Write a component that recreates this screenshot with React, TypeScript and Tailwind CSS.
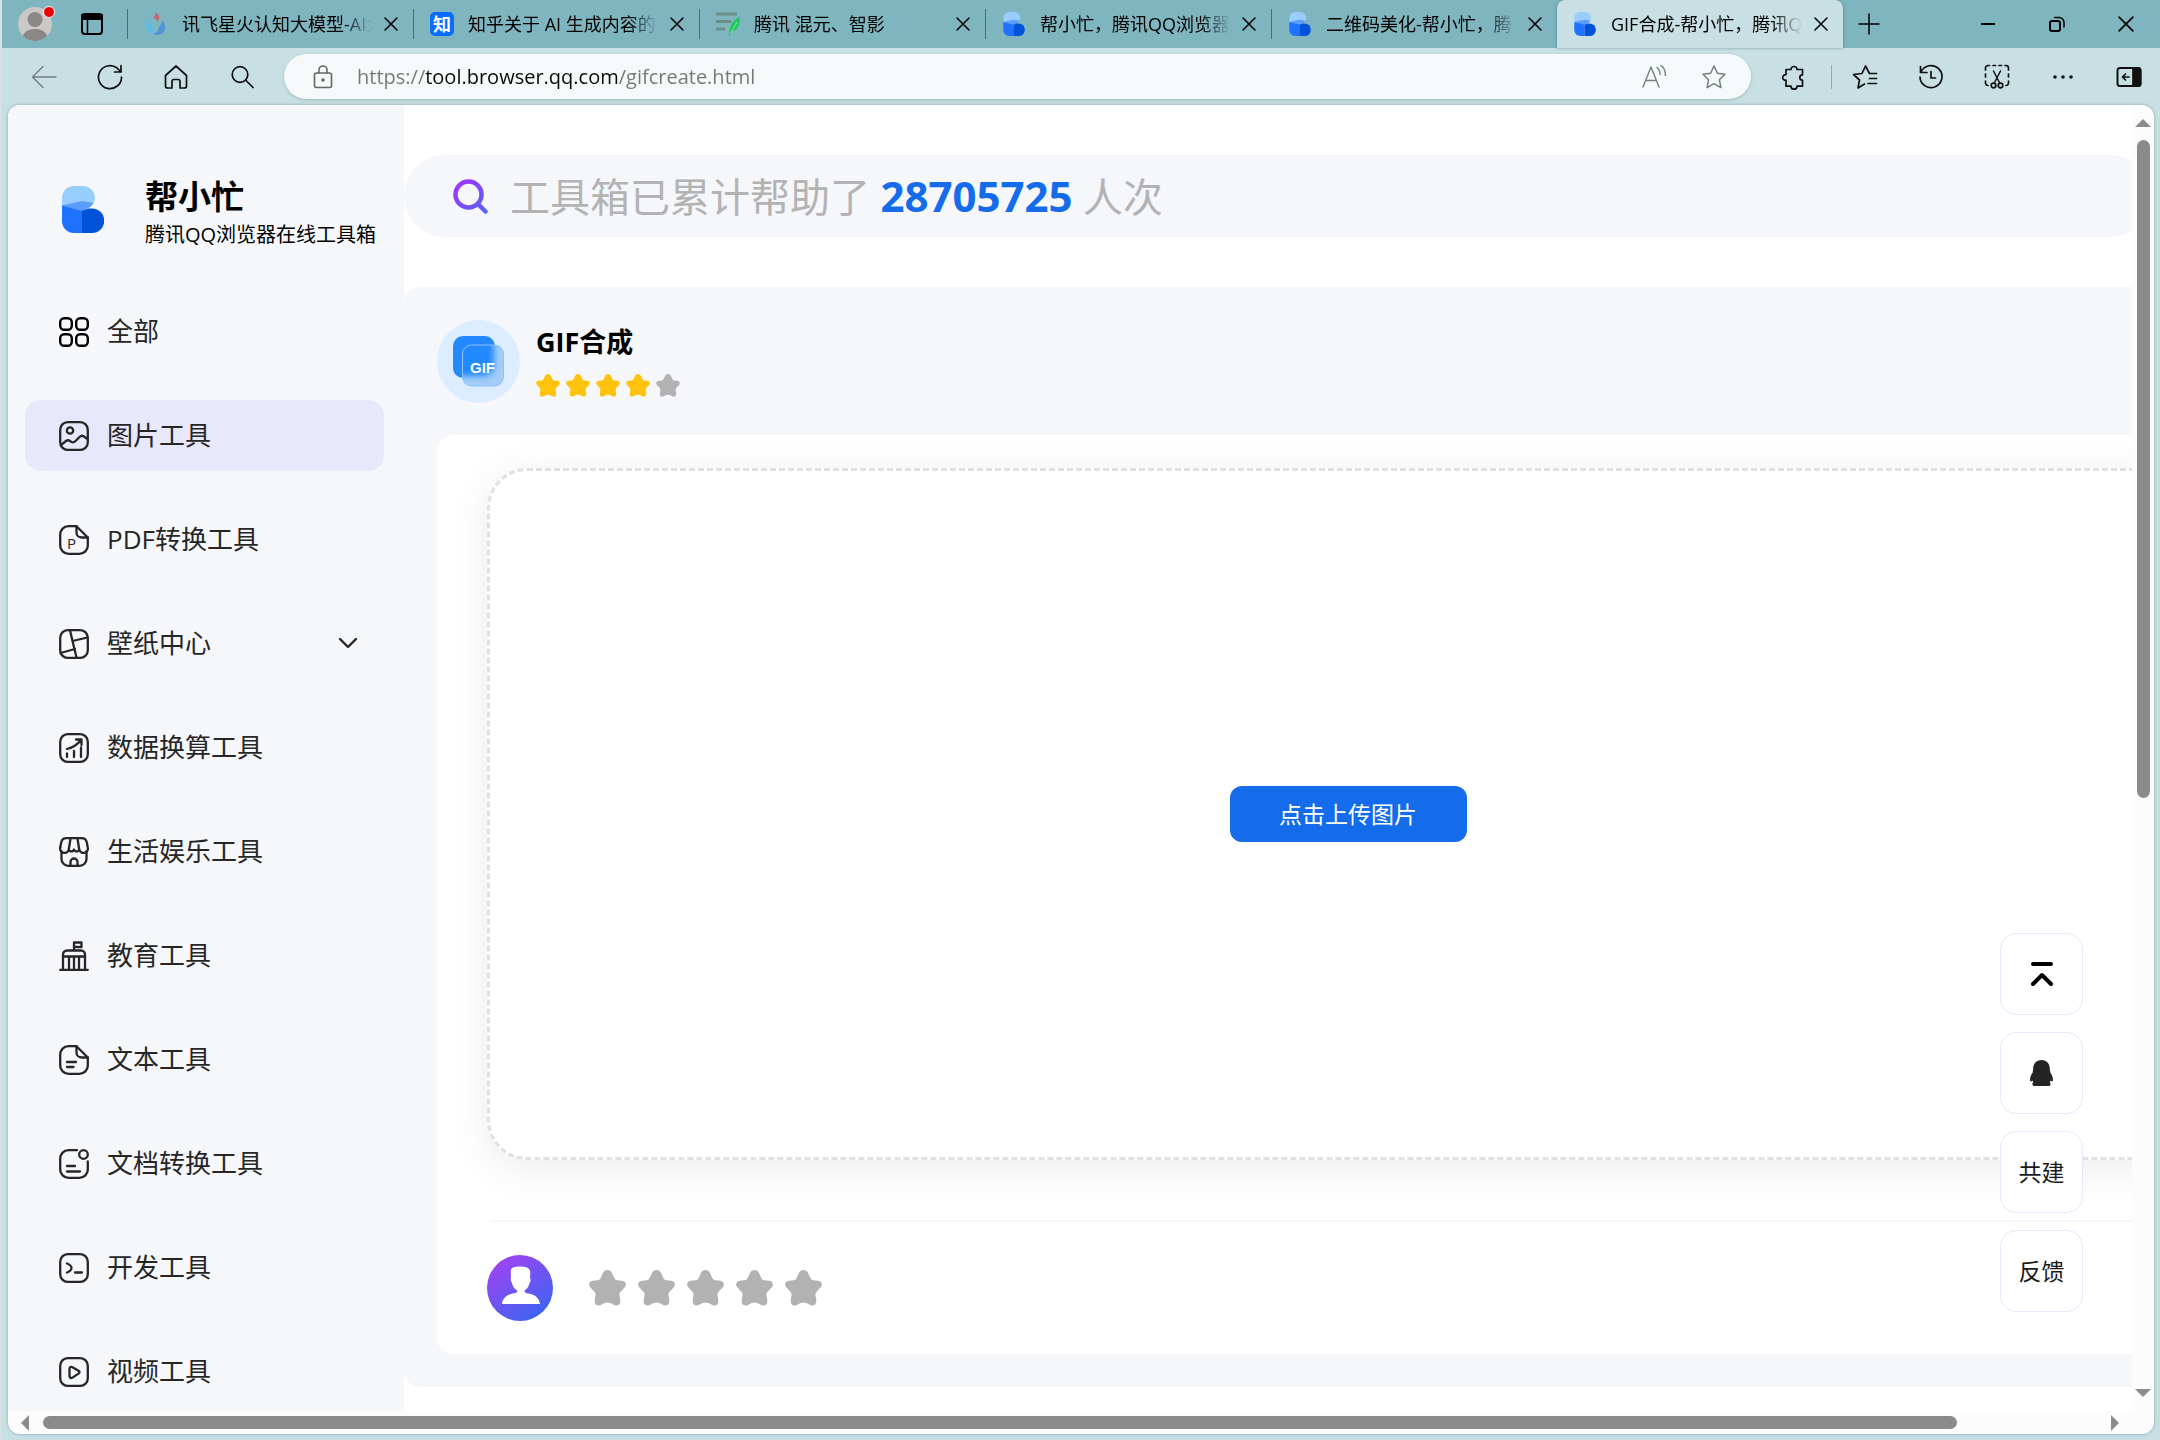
import type { ReactNode } from "react";

const RULE = { fill: "none", stroke: "currentColor", strokeLinecap: "round", strokeLinejoin: "round" } as const;

function Logo({ className }: { className: string }) {
  return (
    <svg viewBox="0 0 42 47" className={className} aria-hidden="true">
      <path fill="#97cdff" d="M0 20V12A12 12 0 0 1 12 0h9a12 12 0 0 1 12 12c0 2-.5 4-2 5.500L20 22z" />
      <path fill="#5a9dff" d="M0 19.500 20 15l11.500 2c-1.500 3-3.500 4.500-6.500 5.500L20 26z" />
      <path fill="#1f72ff" d="M0 19.500 20 25v22h-8A12 12 0 0 1 0 35z" />
      <path fill="#0052d9" d="m20 25 6-2.500h4a12.200 12.200 0 0 1 0 24.500H20z" />
    </svg>
  );
}

function Star({ className }: { className: string }) {
  return (
    <svg viewBox="0 0 37 36" className={className} fill="currentColor" aria-hidden="true">
      <path d="M18.500 0c2.500 0 4 1.500 5 4l1.800 4c.6 1.300 1.500 2 3 2.200l5 .5c3.700.5 4.700 4.300 2.300 6.800l-4 4.200c-1 1-1.300 2.200-1.100 3.500l.8 5c.6 4-2.600 6.400-6 4.800l-4-2c-1.800-.8-3.800-.8-5.600 0l-4 2c-3.400 1.600-6.600-.8-6-4.800l.8-5c.2-1.300-.1-2.500-1.100-3.500l-4-4.200c-2.400-2.500-1.400-6.300 2.300-6.800l5-.5c1.500-.2 2.400-.9 3-2.200l1.800-4c1-2.500 2.500-4 5-4z" />
    </svg>
  );
}

function Glyph({ children, width = 2.3 }: { children: ReactNode; width?: number }) {
  return (
    <svg viewBox="0 0 30 30" className="size-[30px] shrink-0" {...RULE} strokeWidth={width} aria-hidden="true">
      {children}
    </svg>
  );
}

const frame = <rect x="1.200" y="1.200" width="27.600" height="27.600" rx="7.500" />;
const sheet = (
  <>
    <path d="M17.500 1.200H9.500A8.300 8.300 0 0 0 1.200 9.500v11A8.300 8.300 0 0 0 9.500 28.800h11a8.300 8.300 0 0 0 8.300-8.300V12.500z" />
    <path d="M17.500 1.200v6.300a5 5 0 0 0 5 5h6.300" />
  </>
);

const menu: { label: string; icon: ReactNode; active?: boolean; expandable?: boolean }[] = [
  {
    label: "全部",
    icon: (
      <Glyph width={2.4}>
        <g stroke="#000">
          <rect x="1.200" y="1.200" width="11.600" height="11.600" rx="4" />
          <rect x="17.200" y="1.200" width="11.600" height="11.600" rx="4" />
          <rect x="1.200" y="17.200" width="11.600" height="11.600" rx="4" />
          <rect x="17.200" y="17.200" width="11.600" height="11.600" rx="4" />
        </g>
      </Glyph>
    ),
  },
  {
    label: "图片工具",
    active: true,
    icon: (
      <Glyph>
        {frame}
        <circle cx="11" cy="9.500" r="3.200" />
        <path d="m2 24 5-4q2-1.500 4 0l1.500 1q2 1 4-1l4-4q2-2 4-.8L28.500 18" />
      </Glyph>
    ),
  },
  {
    label: "PDF转换工具",
    icon: (
      <Glyph>
        {sheet}
        <text x="8" y="24" fontSize="15" fill="currentColor" stroke="none">P</text>
      </Glyph>
    ),
  },
  {
    label: "壁纸中心",
    expandable: true,
    icon: (
      <Glyph>
        {frame}
        <path d="M11 1.500 17.500 28.500M13.500 12 28.500 8.500M1.500 24 16 20" />
      </Glyph>
    ),
  },
  {
    label: "数据换算工具",
    icon: (
      <Glyph>
        {frame}
        <path d="M8 16q8.500-2 14-9M17 6.500h5.500V12M8 20.500V24M15 18v6M22 14.500V24" />
      </Glyph>
    ),
  },
  {
    label: "生活娱乐工具",
    icon: (
      <Glyph>
        <path d="M2.500 14.500V22a6.800 6.800 0 0 0 6.800 6.800h11.400a6.800 6.800 0 0 0 6.800-6.800v-7.500" />
        <path d="M1.200 10.500 2.200 5.500Q3 1.200 7.500 1.200h15q4.500 0 5.300 4.300l1 5a4.400 4.400 0 0 1-8.600 2" />
        <path d="M1.200 10.500a4.400 4.400 0 0 0 8.600 2L11.500 1.500M18.500 1.500l1.700 11M9.800 12.500a2.700 2.700 0 0 0 5.200 0a2.700 2.700 0 0 0 5.200 0M11.500 28.500V25a3.500 3.500 0 0 1 7 0v3.500" />
      </Glyph>
    ),
  },
  {
    label: "教育工具",
    icon: (
      <Glyph>
        <path d="M1.200 28.800h27.600M4 28.800V13.500a4 4 0 0 1 4-4h14a4 4 0 0 1 4 4v15.300M4 15.500h22M10 15.500v13M15 15.500v13M20 15.500v13M15 9.500V1.500h7.500V6H15" />
      </Glyph>
    ),
  },
  {
    label: "文本工具",
    icon: (
      <Glyph>
        {sheet}
        <path d="M8 17h9M8 22h6.500" />
      </Glyph>
    ),
  },
  {
    label: "文档转换工具",
    icon: (
      <Glyph>
        <path d="M18 1.200H9.500A8.300 8.300 0 0 0 1.200 9.500v11A8.300 8.300 0 0 0 9.500 28.800h11a8.300 8.300 0 0 0 8.300-8.300V12.500" />
        <circle cx="24.500" cy="5.500" r="4.300" />
        <path d="M8 17h8M8 22.500h13" />
      </Glyph>
    ),
  },
  {
    label: "开发工具",
    icon: (
      <Glyph>
        {frame}
        <path d="M8 10.500c2.500 1 4.500 3 4.500 4.500s-2 3.500-4.500 4.500M16 19.500h7" />
      </Glyph>
    ),
  },
  {
    label: "视频工具",
    icon: (
      <Glyph>
        {frame}
        <path d="M10.500 12v7c0 2 1.500 2.500 3 1.600l6-4q2-1.400 0-2.800l-6-3.500c-1.500-1-3-.3-3 1.700z" />
      </Glyph>
    ),
  },
];

const logoIcon = <Logo className="h-6 w-6" />;

const tabs: { title: string; icon: ReactNode; active?: boolean }[] = [
  {
    title: "讯飞星火认知大模型-AI大",
    icon: (
      <svg viewBox="0 0 24 24" className="size-6" aria-hidden="true">
        <path d="M11 0c6 4 5 7 2 10 0-3-2-4-4-4 2-2 2.500-4 2-6z" fill="#c4686f" />
        <path d="M6 5c1 4-1 6 2 9 2 2 3 4 1 8C4 21 2 18 2 14c0-4 2-6 4-9z" fill="#5fbbe0" />
        <path d="M18 8c4 5 4 9 1 12.500-3 3-7 3-10 1.500 4-1 5-3 6-6 1-3 3-4 3-8z" fill="#4f93d8" />
      </svg>
    ),
  },
  {
    title: "知乎关于 AI 生成内容的",
    icon: (
      <span className="flex size-6 items-center justify-center rounded-[5px] bg-[#0a6cff] text-[18px] leading-6 font-bold text-white">知</span>
    ),
  },
  {
    title: "腾讯 混元、智影",
    icon: (
      <svg viewBox="0 0 24 24" className="size-6" aria-hidden="true">
        <path d="M0 2h21M0 9.500h15M0 17h9" stroke="#6c8d84" strokeWidth="3" />
        <path d="M24 5c0 8-2 13-8 14l-2 5h-1c0-9 3-16 11-19z" fill="#1fc95a" />
        <path d="m14 22 7-12" stroke="#7fe59c" strokeWidth="1" />
      </svg>
    ),
  },
  { title: "帮小忙，腾讯QQ浏览器", icon: logoIcon },
  { title: "二维码美化-帮小忙，腾", icon: logoIcon },
  { title: "GIF合成-帮小忙，腾讯Q", icon: logoIcon, active: true },
];

function Cross({ className }: { className: string }) {
  return (
    <svg viewBox="0 0 14 14" className={className} {...RULE} strokeWidth="1.500" aria-hidden="true">
      <path d="m1 1 12 12M13 1 1 13" />
    </svg>
  );
}

function TabStrip() {
  return (
    <header className="flex h-12 items-stretch bg-[#7fb5bf] text-black">
      <div className="flex flex-1 items-stretch pl-4">
        <button type="button" aria-label="个人资料" className="relative mr-[29px] size-[34px] self-center">
          <svg viewBox="0 0 34 34" className="size-[34px] rounded-full" aria-hidden="true">
            <rect width="34" height="34" fill="#cbc9c6" />
            <circle cx="17" cy="12.500" r="7.500" fill="#8a8886" />
            <path d="M4 34c0-8 5-12 13-12s13 4 13 12z" fill="#8a8886" />
          </svg>
          <span className="absolute -top-px -right-[3px] size-3 rounded-full border border-white bg-[#e80000]" />
        </button>
        <button type="button" aria-label="标签页操作" className="mr-6 self-center">
          <svg viewBox="0 0 22 22" className="size-[22px]" {...RULE} strokeWidth="2" aria-hidden="true">
            <rect x="1" y="1" width="20" height="20" rx="3" />
            <path d="M1 2h20v4H1z" fill="currentColor" />
            <path d="M6.500 6v15" strokeWidth="1.500" />
          </svg>
        </button>
        {tabs.map((tab, i) => (
          <div
            key={tab.title}
            className={
              tab.active
                ? "flex max-w-[286px] min-w-0 flex-1 items-center rounded-t-lg bg-[#c8dfe3] pl-4 shadow-[0_0_3px_rgba(0,60,70,0.45)]"
                : "flex max-w-[286px] min-w-0 flex-1 items-center"
            }
          >
            {!tab.active && <span className="mr-4 h-[30px] w-px shrink-0 bg-[#4b6e75]" />}
            {tab.icon}
            <button
              type="button"
              aria-current={tab.active ? "page" : undefined}
              className="ml-[14px] min-w-0 flex-1 overflow-hidden text-left text-[18px] leading-7 whitespace-nowrap [mask-image:linear-gradient(to_right,#000_calc(100%-30px),transparent)]"
            >
              {tab.title}
            </button>
            <button type="button" aria-label={`关闭标签页 ${i + 1}`} className="mr-[15px] ml-3 shrink-0">
              <Cross className="size-[14px]" />
            </button>
          </div>
        ))}
        <button type="button" aria-label="新建标签页" className="ml-[15px] self-center">
          <svg viewBox="0 0 22 22" className="size-[22px]" {...RULE} strokeWidth="1.500" aria-hidden="true">
            <path d="M11 1v20M1 11h20" />
          </svg>
        </button>
      </div>
      <div className="flex items-center gap-[53px] pr-[26px]">
        <button type="button" aria-label="最小化">
          <svg viewBox="0 0 16 16" className="size-4" {...RULE} strokeWidth="2" aria-hidden="true">
            <path d="M1 8h14" strokeLinecap="butt" />
          </svg>
        </button>
        <button type="button" aria-label="还原">
          <svg viewBox="0 0 16 16" className="size-4" {...RULE} strokeWidth="2" aria-hidden="true">
            <rect x="1" y="5" width="10" height="10" rx="2" />
            <path d="M5.500 1.500H10a5 5 0 0 1 5 5V11" strokeWidth="1.500" />
          </svg>
        </button>
        <button type="button" aria-label="关闭">
          <Cross className="size-4" />
        </button>
      </div>
    </header>
  );
}

function Tool({ label, children, muted = false }: { label: string; children: ReactNode; muted?: boolean }) {
  return (
    <button type="button" aria-label={label} className={muted ? "text-[#747f82]" : "text-[#111]"}>
      <svg viewBox="0 0 26 26" className="size-[26px]" {...RULE} strokeWidth="1.700" aria-hidden="true">
        {children}
      </svg>
    </button>
  );
}

function Toolbar() {
  return (
    <div className="flex items-center gap-10 pt-1.5 pr-[18px] pb-1.5 pl-[29px]">
      <Tool label="后退" muted>
        <path d="M25 13H2M12 2.500 1.500 13 12 23.500" strokeWidth="1.400" />
      </Tool>
      <Tool label="刷新">
        <path d="M24.500 13A11.500 11.500 0 1 1 20 4l4 4M24 1.500V8h-6.500" />
      </Tool>
      <Tool label="主页">
        <path d="M2.500 11.500 13 2l10.500 9.500V22a2 2 0 0 1-2 2H17v-6.500a2 2 0 0 0-2-2h-4a2 2 0 0 0-2 2V24H4.500a2 2 0 0 1-2-2z" />
      </Tool>
      <Tool label="搜索">
        <circle cx="11" cy="10.500" r="7.800" />
        <path d="m17 16.500 7 7" />
      </Tool>
      <form className="-ml-[11px] flex h-[45px] min-w-0 flex-1 items-center rounded-full bg-[#f5f9fa] pr-6 pl-[26px] shadow-[0_1px_3px_rgba(80,120,130,0.35)]">
        <svg viewBox="0 0 26 26" className="size-[26px] shrink-0 text-[#666]" {...RULE} strokeWidth="1.600" aria-hidden="true">
          <rect x="4.500" y="9" width="17" height="14.500" rx="2" />
          <path d="M9 9V6a4 4 0 0 1 8 0v3" />
          <circle cx="13" cy="16" r="1" fill="currentColor" />
        </svg>
        <input
          type="text"
          aria-label="地址栏"
          defaultValue="https://tool.browser.qq.com/gifcreate.html"
          className="ml-[21px] h-[45px] min-w-0 flex-1 bg-[linear-gradient(to_right,#767676_68px,#0a0a0a_68px,#0a0a0a_261px,#767676_261px)] bg-clip-text text-[20px] text-transparent outline-none"
        />
        <div className="flex items-center gap-[34px]">
          <Tool label="朗读此页" muted>
            <path d="m2 23 8-20 8 20M5 16.500h10M16 3.500c2 1.500 3 4 3 7M20 1.500c3 2 4.500 5 4.500 10" strokeWidth="1.400" />
          </Tool>
          <Tool label="收藏此页" muted>
            <path d="m13 2 3.400 7.200 7.600 1-5.600 5.500 1.500 7.900-6.900-3.900-6.900 3.900 1.500-7.900L2 10.200l7.600-1z" strokeWidth="1.500" />
          </Tool>
        </div>
      </form>
      <div className="-ml-2.5 flex items-center gap-6">
        <Tool label="扩展">
          <path d="M5 5.500h5a3 3 0 1 1 6 0h5.500v5.300a2.700 2.700 0 1 0 0 5.400v6H16a3 3 0 0 1-6 0H5v-6a2.800 2.800 0 1 1 0-5.500z" />
        </Tool>
        <span className="h-6 w-px bg-[#94a9ad]" />
      </div>
      <div className="-ml-5 flex items-center gap-10">
        <Tool label="收藏夹">
          <path d="M24.500 9.500h-7L13.500 2 10 9.500l-8.500 1 6 5.500-1.500 8 6.500-4M17.500 14.500h7M16 19.500h8.500" />
        </Tool>
        <Tool label="历史记录">
          <path d="M3 8a11 11 0 1 1-1 5M2.500 2.500V8.500H9M13 7.500v6.500h4.500" />
        </Tool>
        <Tool label="网页捕获">
          <path d="M1.500 6V4a2.500 2.500 0 0 1 2.500-2.500h1.500M9 1.500h2.500M15 1.500h2.500M21 1.500h1a2.500 2.500 0 0 1 2.500 2.500v2M24.500 10v3M24.500 17v2a2.500 2.500 0 0 1-2.500 2.500M1.500 10v3M1.500 17v2a2.500 2.500 0 0 0 2.500 2.500" />
          <path d="m9.500 7 6.200 12M16.500 7l-6.200 12" strokeWidth="1.500" />
          <circle cx="9.500" cy="21.500" r="2.300" />
          <circle cx="16.500" cy="21.500" r="2.300" />
        </Tool>
        <Tool label="更多">
          <g fill="currentColor" stroke="none">
            <circle cx="5" cy="13" r="1.800" />
            <circle cx="13" cy="13" r="1.800" />
            <circle cx="21" cy="13" r="1.800" />
          </g>
        </Tool>
        <Tool label="侧边栏">
          <rect x="1.500" y="4" width="23" height="18" rx="2.500" strokeWidth="2" />
          <path d="M17 4h5.500a2 2 0 0 1 2 2v14a2 2 0 0 1-2 2H17z" fill="currentColor" />
          <path d="M13 13H6.500M9.500 10l-3 3 3 3" />
        </Tool>
      </div>
    </div>
  );
}

function Sidebar() {
  return (
    <aside className="w-[396px] shrink-0 bg-[#f5f7fb]">
      <div className="flex pt-[69px] pl-[54px]">
        <Logo className="mt-3 h-[47px] w-[42px]" />
        <div className="ml-[41px] text-black">
          <h1 className="text-[33px] leading-[46px] font-bold">帮小忙</h1>
          <p className="text-[20px] leading-[30px] whitespace-nowrap">腾讯QQ浏览器在线工具箱</p>
        </div>
      </div>
      <nav className="mt-[46px] flex flex-col gap-[33px] pr-5 pl-[17px]">
        {menu.map((item) => (
          <a
            key={item.label}
            href="#"
            className={
              item.active
                ? "flex h-[71px] items-center rounded-2xl bg-[#e8e8fc] px-[34px] text-[26px] text-[#262626]"
                : "flex h-[71px] items-center rounded-2xl px-[34px] text-[26px] text-[#262626]"
            }
          >
            {item.icon}
            <span className="ml-[18px] flex-1">{item.label}</span>
            {item.expandable && (
              <svg viewBox="0 0 20 20" className="-mr-2 size-5" {...RULE} strokeWidth="2.400" aria-hidden="true">
                <path d="m2 5 8 8 8-8" />
              </svg>
            )}
          </a>
        ))}
      </nav>
    </aside>
  );
}

function GifBadge() {
  return (
    <svg viewBox="0 0 83 83" className="size-[83px]" aria-hidden="true">
      <defs>
        <clipPath id="pane">
          <rect x="25.500" y="25" width="41" height="41" rx="9" />
        </clipPath>
        <filter id="frost" x="-50%" y="-50%" width="200%" height="200%">
          <feGaussianBlur stdDeviation="3" />
        </filter>
      </defs>
      <circle cx="41.500" cy="41.500" r="41.500" fill="#dcedff" />
      <rect x="16" y="16" width="42" height="42" rx="10" fill="#2489ff" />
      <g clipPath="url(#pane)">
        <rect x="25" y="24" width="43" height="43" fill="#a3cdf7" />
        <rect x="12" y="12" width="45" height="44" rx="10" fill="#2489ff" filter="url(#frost)" />
      </g>
      <rect x="25.500" y="25" width="41" height="41" rx="9" fill="none" stroke="#8cc3ff" />
      <text x="33" y="53" fontSize="15" fontWeight="700" fill="#fff" fontFamily="Liberation Sans, sans-serif">GIF</text>
    </svg>
  );
}

function SearchBar() {
  return (
    <label className="relative mr-[139px] flex h-[82px] items-center rounded-full bg-[#f5f7fb] pl-[49px]">
      <svg viewBox="0 0 35 35" className="size-[35px]" aria-hidden="true">
        <defs>
          <linearGradient id="lens" x1="0" y1="0" x2="35" y2="35" gradientUnits="userSpaceOnUse">
            <stop offset="0" stopColor="#a92fff" />
            <stop offset="1" stopColor="#4f66fb" />
          </linearGradient>
        </defs>
        <g fill="none" stroke="url(#lens)" strokeWidth="4.500" strokeLinecap="round">
          <circle cx="15.500" cy="15.500" r="13" />
          <path d="m25 25 7.500 7.500" />
        </g>
      </svg>
      <span className="ml-[22px] text-[40px] leading-[56px] whitespace-nowrap text-[#b3b3b3]">
        工具箱已累计帮助了 <strong className="text-[42px] font-bold text-[#146ceb]">28705725</strong> 人次
      </span>
      <input type="search" className="absolute inset-0 size-full rounded-full bg-transparent px-[108px] outline-none" />
    </label>
  );
}

function Workspace() {
  return (
    <section className="mt-[50px] rounded-2xl bg-[#f5f7fb] px-[33px] pt-[33px] pb-[33px]">
      <div className="flex items-start">
        <GifBadge />
        <div className="ml-4">
          <h2 className="mt-1 text-[27px] leading-9 font-bold text-black">GIF合成</h2>
          <div role="img" aria-label="评分 4 / 5" className="mt-3.5 flex gap-1.5">
            {[1, 2, 3, 4, 5].map((n) => (
              <Star key={n} className={n < 5 ? "h-[23px] w-6 text-[#ffc20d]" : "h-[23px] w-6 text-[#b2b2b2]"} />
            ))}
          </div>
        </div>
      </div>
      <div className="mt-8 rounded-2xl bg-white px-[50px] pt-[33px] pb-[33px]">
        <div className="flex h-[692px] items-center justify-center rounded-[40px] border-[3px] border-dashed border-[#e1e1e1] bg-white shadow-[0_8px_40px_rgba(0,0,0,0.08)]">
          <button type="button" className="h-14 w-[237px] rounded-xl bg-[#146ceb] text-[23px] text-white">
            点击上传图片
          </button>
        </div>
        <hr className="mt-[60px] ml-[3px] border-t-2 border-[#f5f7fb]" />
        <div className="mt-[33px] flex items-center">
          <svg viewBox="0 0 66 66" className="size-[66px]" aria-hidden="true">
            <defs>
              <linearGradient id="person" x1="0.150" y1="0" x2="0.850" y2="1">
                <stop offset="0.050" stopColor="#a044f2" />
                <stop offset="1" stopColor="#3566f0" />
              </linearGradient>
            </defs>
            <circle cx="33" cy="33" r="33" fill="url(#person)" />
            <path fill="#fff" d="M25 13c6-2 14-2 17 1 2 2 1 6 1 9 1 1 1 3 0 4-1 4-3 7-5 8-1 1-.5 2 1 3 8 1 13 4 14 11H15c1-7 6-10 14-11 1.500-1 1.500-2 .5-3-2-1-4-4-5-8-1-1-1-3-.5-4 0-3-1-8 1-10z" />
          </svg>
          <div className="ml-9 flex gap-3" role="group" aria-label="评分">
            {[1, 2, 3, 4, 5].map((n) => (
              <button key={n} type="button" aria-label={`${n} 星`}>
                <Star className="h-9 w-[37px] text-[#b2b2b2]" />
              </button>
            ))}
          </div>
        </div>
      </div>
    </section>
  );
}

const sideButton =
  "flex h-[82px] w-[83px] items-center justify-center rounded-2xl border border-[#e5e9fb] bg-white text-[23px] text-[#1a1a1a]";

function FloatingActions() {
  return (
    <div className="absolute right-[49px] bottom-[99px] flex flex-col gap-[17px]">
      <button type="button" aria-label="回到顶部" className={sideButton}>
        <svg viewBox="0 0 24 26" className="h-[26px] w-6 text-black" {...RULE} strokeWidth="4" aria-hidden="true">
          <path d="M3 3h18M3 23l9-9 9 9" />
        </svg>
      </button>
      <button type="button" aria-label="QQ" className={sideButton}>
        <svg viewBox="0 0 22 25" className="h-[26px] w-[23px]" aria-hidden="true">
          <path fill="#242424" d="M11 0c5 0 8 3.500 8 8.500l.5 3.500c1.500 2 2.500 4.500 2.500 7 0 2-1 2-2.200.8L19 21.500c1.200.8 1 3.500-1.500 3.500h-13C2 25 1.800 22.300 3 21.500l-.8-1.700C1 21 0 21 0 19c0-2.500 1-5 2.500-7L3 8.500C3 3.500 6 0 11 0z" />
        </svg>
      </button>
      <a href="#" className={sideButton}>共建</a>
      <a href="#" className={sideButton}>反馈</a>
    </div>
  );
}

function Arrow({ d, className }: { d: string; className: string }) {
  return (
    <svg viewBox="0 0 16 16" className={className} aria-hidden="true">
      <path d={d} fill="#8b8b8b" />
    </svg>
  );
}

export default function App() {
  return (
    <div className="flex h-screen flex-col overflow-hidden border-l-2 border-[#d8e0e2] bg-[#c8dfe3] font-['Open_Sans','Noto_Sans_CJK_SC',sans-serif]">
      <TabStrip />
      <Toolbar />
      <div className="mr-1.5 mb-1.5 ml-1.5 flex min-h-0 flex-1 flex-col overflow-hidden rounded-xl bg-[#fcfcfc] shadow-[0_0_3px_rgba(60,110,120,0.5)]">
        <div className="flex min-h-0 flex-1">
          <div className="relative flex min-w-0 flex-1 overflow-hidden bg-white">
            <Sidebar />
            <main className="min-w-0 flex-1">
              <div className="w-[calc(100%+160px)] pt-[50px]">
                <SearchBar />
                <Workspace />
              </div>
            </main>
            <FloatingActions />
          </div>
          <div className="flex w-[22px] shrink-0 flex-col items-center pt-2.5">
            <Arrow d="M8 4l8 8H0z" className="size-4" />
            <div className="flex flex-1 flex-col pt-[9px] pb-1">
              <div className="h-[53%] w-[13px] rounded-full bg-[#8b8b8b]" />
            </div>
            <Arrow d="M8 12l8-8H0z" className="mb-2.5 size-4" />
          </div>
        </div>
        <div className="flex h-[23px] shrink-0 items-center pr-[31px] pl-[9px]">
          <Arrow d="M4 8l8-8v16z" className="size-4" />
          <div className="flex-1 pr-1.5 pl-2.5">
            <div className="h-[13px] w-[93%] rounded-full bg-[#8b8b8b]" />
          </div>
          <Arrow d="M12 8L4 0v16z" className="size-4" />
        </div>
      </div>
    </div>
  );
}
